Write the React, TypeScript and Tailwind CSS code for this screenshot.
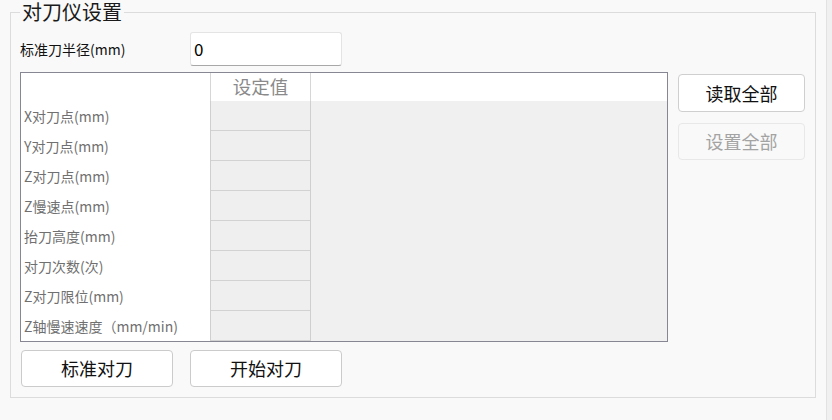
import React from "react";

const rows = [
  "X对刀点(mm)",
  "Y对刀点(mm)",
  "Z对刀点(mm)",
  "Z慢速点(mm)",
  "抬刀高度(mm)",
  "对刀次数(次)",
  "Z对刀限位(mm)",
  "Z轴慢速速度（mm/min)",
];

const font = { fontFamily: '"Microsoft YaHei", "Noto Sans CJK SC", sans-serif' };

export default function App() {
  return (
    <div className="w-[832px] h-[420px] bg-[#f9f9f9] flex overflow-hidden" style={font}>
      <div className="w-[826px] h-full pl-[10px]">
        <fieldset className="w-[806px] h-[398px] border border-[#dcdcdc] pl-[9px] pt-[8px]">
          <legend className="px-[2px] text-[20px] leading-[24px] text-[#1a1a1a]">对刀仪设置</legend>
          <div className="flex items-center h-[34px]">
            <div className="w-[170px] text-[14px] text-[#111]">标准刀半径(mm)</div>
            <div className="w-[152px] h-[34px] bg-white border border-[#e4e4e4] border-b-[#a8a8a8] rounded-[3px] flex items-center pl-[3px] text-[17px] text-black">
              0
            </div>
          </div>
          <div className="flex mt-[6px]">
            <div className="w-[648px] h-[270px] border border-[#878794] bg-[#f0f0f0] flex flex-col">
              <div className="h-[28px] bg-white flex">
                <div className="w-[189px]" />
                <div className="w-[101px] border-l border-r border-[#d6d6d6] flex items-center justify-center text-[18.5px] text-[#8a8a8a]">
                  设定值
                </div>
              </div>
              <div className="flex flex-1">
                <div className="w-[189px] bg-white flex flex-col">
                  {rows.map((r) => (
                    <div
                      key={r}
                      className="h-[30px] flex items-center pl-[3px] text-[14px] text-[#707070] whitespace-nowrap"
                      style={{ fontFamily: '"SimSun", "Noto Sans CJK SC", sans-serif' }}
                    >
                      {r}
                    </div>
                  ))}
                </div>
                <div className="w-[101px] flex flex-col border-l border-r border-[#cfcfcf]">
                  {rows.map((r) => (
                    <div key={r} className="h-[30px] border-b border-[#d2d2d2] bg-[#efefef]" />
                  ))}
                </div>
              </div>
            </div>
            <div className="ml-[10px] pt-[2px] flex flex-col gap-[11px]">
              <button className="w-[127px] h-[38px] bg-white border border-[#cfcfcf] rounded-[4px] text-[18px] text-[#111]">
                读取全部
              </button>
              <button className="w-[127px] h-[37px] bg-[#f9f9f9] border border-[#e8e8e8] rounded-[4px] text-[18px] text-[#a3a3a3]">
                设置全部
              </button>
            </div>
          </div>
          <div className="flex mt-[8px]">
            <button className="ml-[1px] w-[152px] h-[37px] bg-white border border-[#cbcbcb] rounded-[4px] text-[18px] text-[#111]">
              标准对刀
            </button>
            <button className="ml-[17px] w-[152px] h-[37px] bg-white border border-[#cbcbcb] rounded-[4px] text-[18px] text-[#111]">
              开始对刀
            </button>
          </div>
        </fieldset>
      </div>
      <div className="w-[6px] h-full border-l border-[#e2e2e2] bg-[#f0f0f0]" />
    </div>
  );
}
